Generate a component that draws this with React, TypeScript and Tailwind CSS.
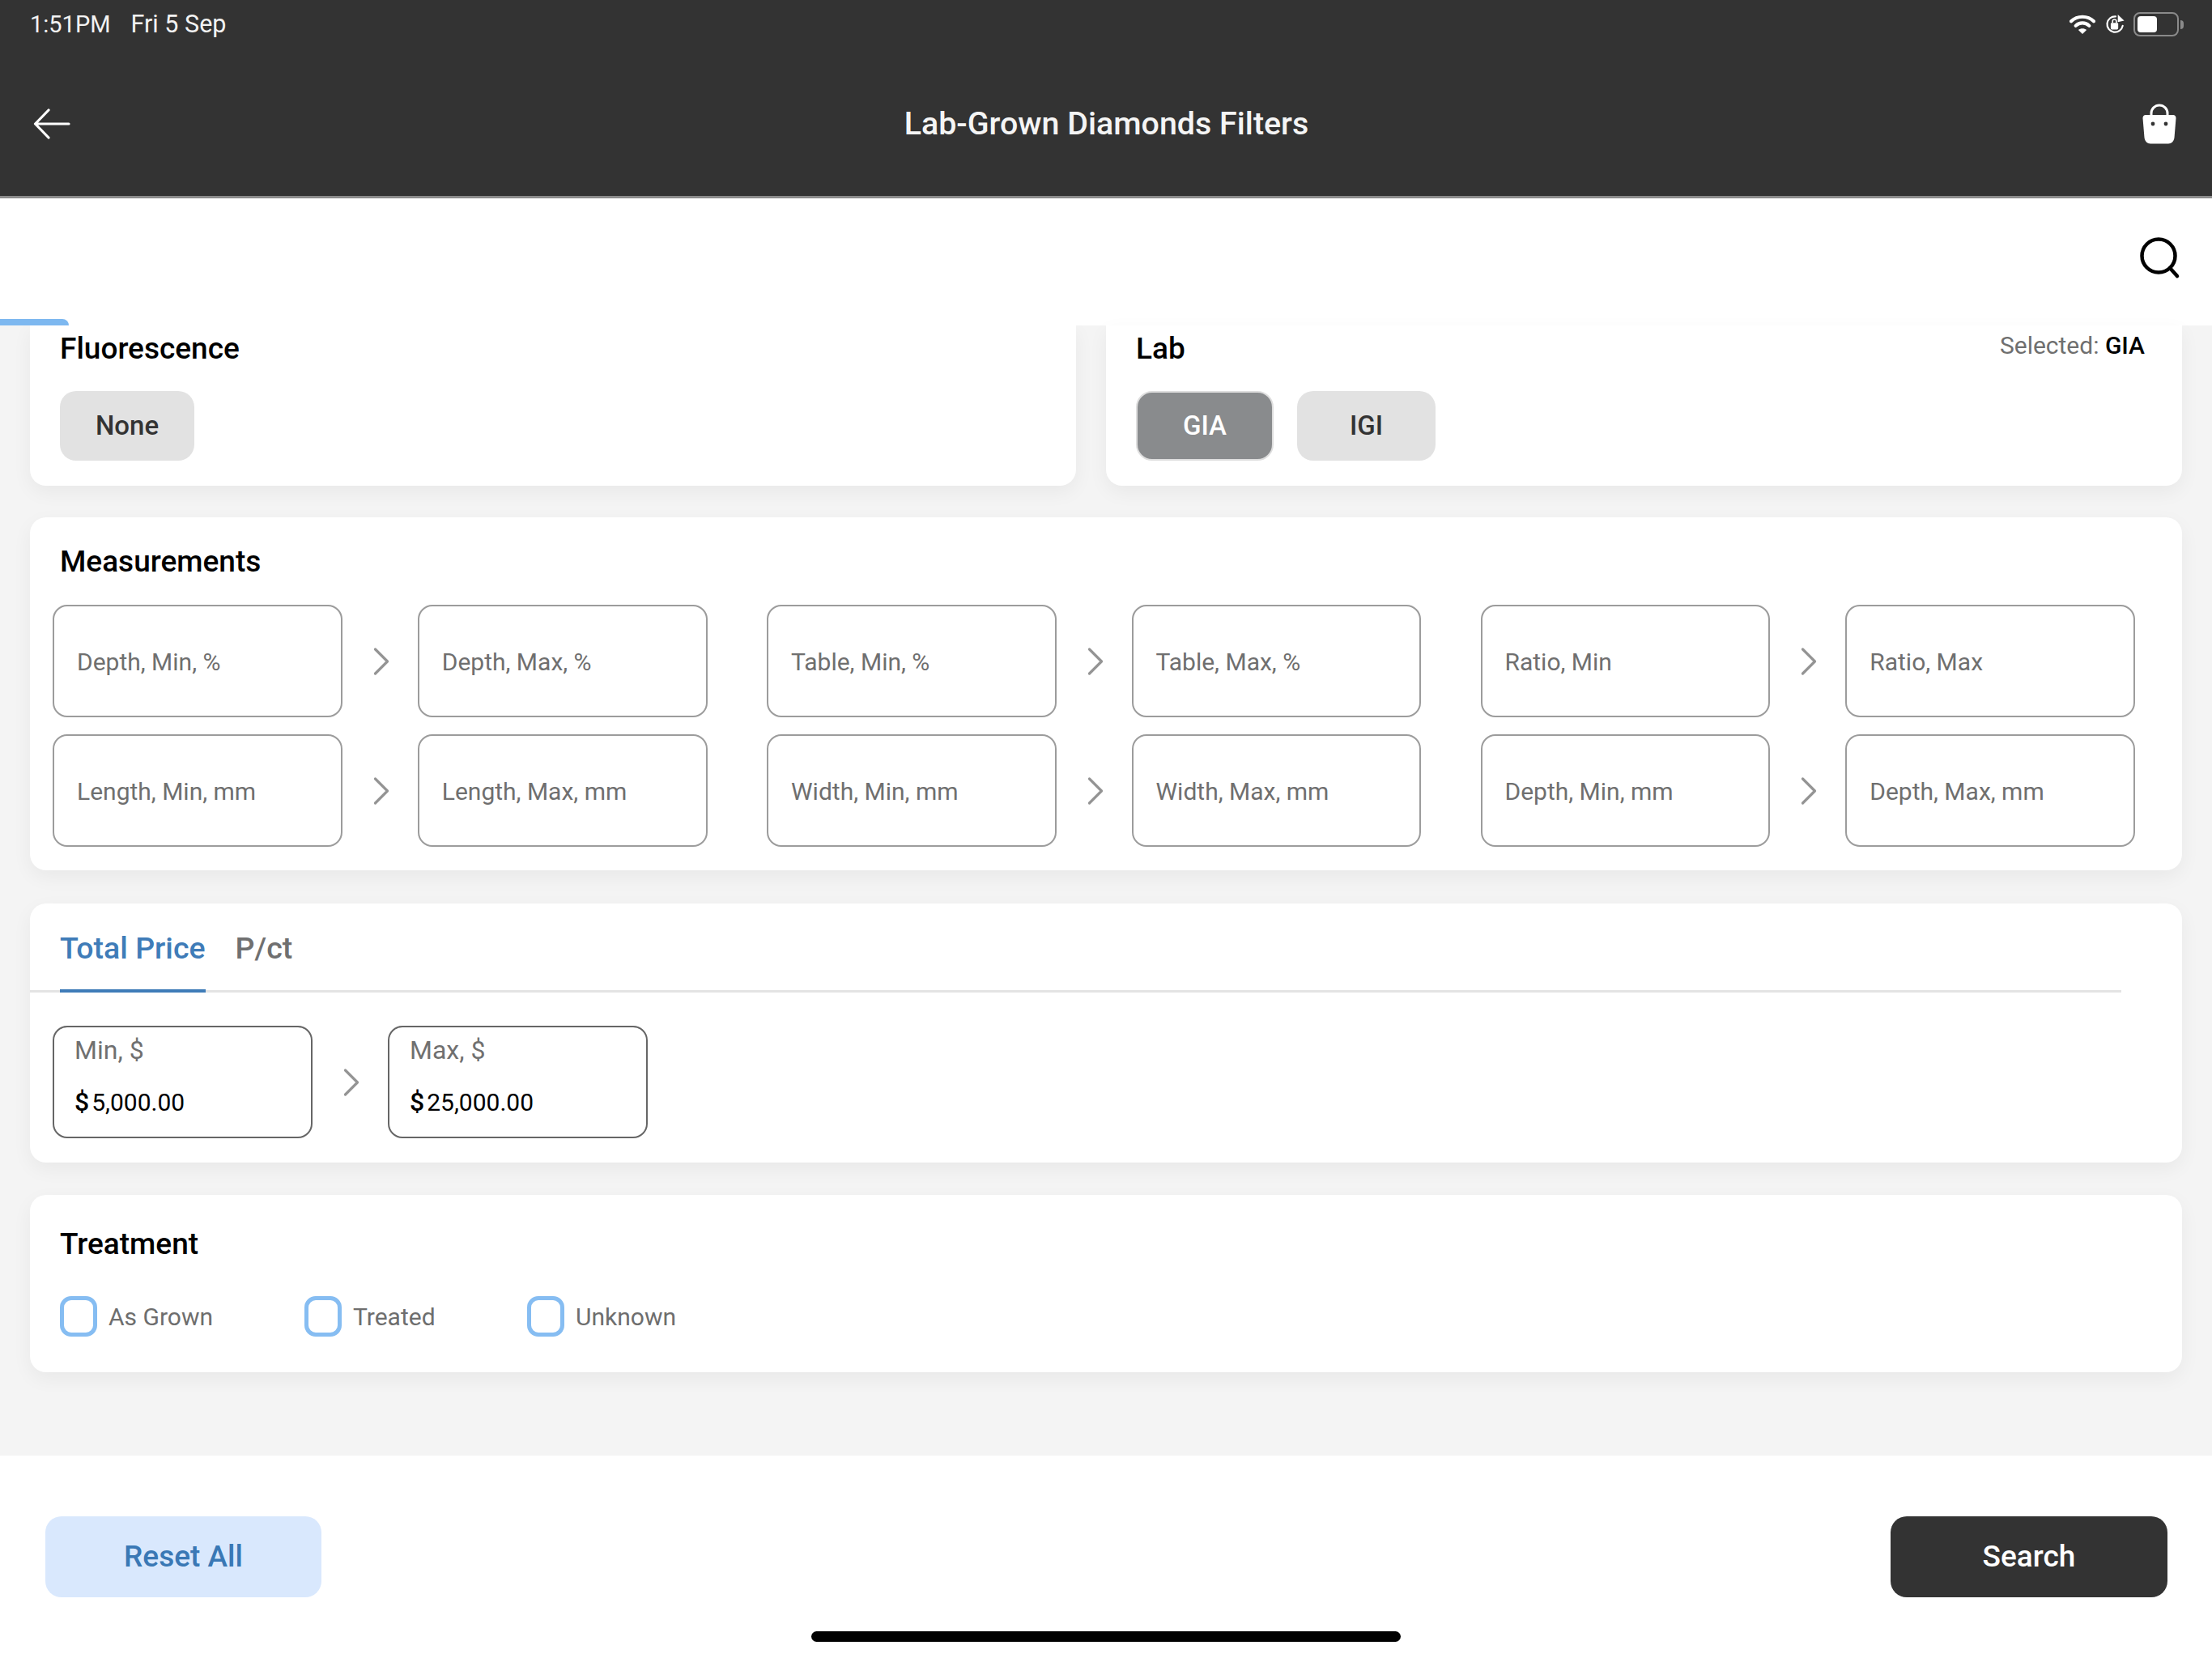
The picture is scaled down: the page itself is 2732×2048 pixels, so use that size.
import { ChevronRight } from "lucide-react";

const measurements = [
  ["Depth, Min, %", "Depth, Max, %"],
  ["Table, Min, %", "Table, Max, %"],
  ["Ratio, Min", "Ratio, Max"],
  ["Length, Min, mm", "Length, Max, mm"],
  ["Width, Min, mm", "Width, Max, mm"],
  ["Depth, Min, mm", "Depth, Max, mm"],
];

const cardClass = "bg-white rounded-[20px] shadow-[0_8px_24px_rgba(0,0,0,0.05)]";

function Arrow() {
  return (
    <div className="w-[93px] shrink-0 pl-[3px] flex items-center justify-center">
      <ChevronRight className="w-[60px] h-[60px] text-[#949494]" strokeWidth={1.3} />
    </div>
  );
}

function MeasureField({ label }: { label: string }) {
  return (
    <div className="flex-1 h-[139px] rounded-[18px] border-2 border-[#9c9c9c] flex items-center pl-[28px] pt-[1px] text-[30px] text-[#6f6f6f]">
      {label}
    </div>
  );
}

function PriceField({ label, value }: { label: string; value: string }) {
  return (
    <div className="w-[321px] h-[139px] rounded-[18px] border-[2.5px] border-[#666666] pl-[25px] pt-[9px] flex flex-col">
      <span className="text-[32px] leading-[38px] text-[#707070]">{label}</span>
      <span className="mt-[26px] text-[30px] leading-[38px] text-black">
        <span className="text-[32px] font-medium mr-[3px]">$</span>
        {value}
      </span>
    </div>
  );
}

function Check({ label, className }: { label: string; className: string }) {
  return (
    <div className={`flex items-center ${className}`}>
      <div className="w-[46px] h-[50px] rounded-[14px] border-[5px] border-[#86bdf2]" />
      <span className="ml-[14px] text-[30px] text-[#6e6e6e]">{label}</span>
    </div>
  );
}

export default function App() {
  return (
    <div className="w-full h-screen overflow-hidden flex flex-col bg-[#f4f4f4] font-['Roboto',sans-serif]">
      {/* header */}
      <header className="h-[245px] shrink-0 bg-[#333333] border-b-[3px] border-[#8c8c8c] text-white flex flex-col">
        <div className="h-[60px] pl-[37px] pr-[35px] flex items-center justify-between text-[#f2f2f2]">
          <div className="flex items-baseline gap-[25px]">
            <span className="text-[29px]">1:51PM</span>
            <span className="text-[30.5px]">Fri 5 Sep</span>
          </div>
          <div className="flex items-center">
            <svg width="32" height="26" viewBox="0 0 34 28" fill="none" className="mr-[12px]">
              <path d="M2 10 C10 2 24 2 32 10" stroke="white" strokeWidth="4.5" strokeLinecap="round" />
              <path d="M8 16 C13 11 21 11 26 16" stroke="white" strokeWidth="4.5" strokeLinecap="round" />
              <path d="M17 27 L11.5 21.5 C14.5 19 19.5 19 22.5 21.5 Z" fill="white" />
            </svg>
            <svg width="24" height="26" viewBox="0 0 26 28" fill="none" className="mr-[11px]">
              <path d="M23.5 16 A10.5 10.5 0 1 1 14 3.5" stroke="white" strokeWidth="2.4" strokeLinecap="round" />
              <path d="M17 1 L25.5 9 L17 11 Z" fill="white" />
              <rect x="7.5" y="12" width="10" height="9" rx="1.5" fill="white" />
              <path d="M10 12 V10 A2.5 2.5 0 0 1 15 10 V12" stroke="white" strokeWidth="1.8" />
            </svg>
            <div className="w-[56px] h-[30px] rounded-[8px] border-2 border-[#8a8a8a] p-[3px]">
              <div className="w-[24px] h-full rounded-[4px] bg-white" />
            </div>
            <div className="w-[4px] h-[11px] ml-[2px] rounded-r-full bg-[#8a8a8a]" />
          </div>
        </div>
        <div className="flex-1 flex items-center justify-between pl-[41px] pr-[44px] pt-[4px]">
          <svg width="46" height="38" viewBox="0 0 46 38" fill="none">
            <path d="M44 19 H3 M19 2 L2.5 19 L19 36" stroke="white" strokeWidth="3.2" strokeLinecap="round" strokeLinejoin="round" />
          </svg>
          <h1 className="text-[39.4px] font-medium text-[#f5f5f5]">Lab-Grown Diamonds Filters</h1>
          <svg width="42" height="50" viewBox="0 0 42 50" fill="none">
            <path d="M11 18 V12 A10 10 0 0 1 31 12 V18" stroke="white" strokeWidth="3" />
            <path d="M4 14 H38 C40 14 41.5 15.5 41.5 18 L39.5 42 C39 46.5 36 49.5 32 49.5 H10 C6 49.5 3 46.5 2.5 42 L0.5 18 C0.5 15.5 2 14 4 14 Z" fill="white" />
            <circle cx="13" cy="25" r="2.4" fill="#333333" />
            <circle cx="29" cy="25" r="2.4" fill="#333333" />
          </svg>
        </div>
      </header>

      {/* search strip */}
      <div className="h-[157px] shrink-0 bg-white relative flex items-center justify-end pr-[39px] pb-[10px]">
        <svg width="50" height="52" viewBox="0 0 50 52" fill="none">
          <circle cx="23" cy="23" r="20.5" stroke="black" strokeWidth="4.5" />
          <path d="M37 38 L46 48" stroke="black" strokeWidth="4.5" strokeLinecap="round" />
        </svg>
        <div className="absolute left-0 bottom-0 w-[85px] h-[8px] rounded-tr-[8px] bg-[#7db8f0]" />
      </div>

      {/* filters */}
      <main className="flex-1 min-h-0 px-[37px] flex flex-col">
        <div className="flex gap-[37px]">
          <section className={`${cardClass} rounded-t-none w-[1292px] h-[198px] pl-[37px]`}>
            <h2 className="pt-[6px] text-[37px] leading-[45px] font-medium text-black">Fluorescence</h2>
            <div className="mt-[30px] w-[166px] h-[86px] rounded-[20px] bg-[#e2e2e2] flex items-center justify-center text-[33px] font-medium text-[#333333]">
              None
            </div>
          </section>
          <section className={`${cardClass} rounded-t-none flex-1 h-[198px] px-[37px] relative`}>
            <h2 className="pt-[6px] text-[37px] leading-[45px] font-medium text-black">Lab</h2>
            <span className="absolute right-[46px] top-[2px] text-[30px] text-[#6f6f6f]">
              Selected: <span className="font-medium text-black">GIA</span>
            </span>
            <div className="mt-[30px] flex gap-[29px]">
              <div className="w-[170px] h-[86px] rounded-[20px] bg-[#898b8d] border-2 border-[#dedede] flex items-center justify-center text-[33px] font-medium text-white">
                GIA
              </div>
              <div className="w-[171px] h-[86px] rounded-[20px] bg-[#e2e2e2] flex items-center justify-center text-[33px] font-medium text-[#333333]">
                IGI
              </div>
            </div>
          </section>
        </div>

        <section className={`${cardClass} mt-[39px] h-[436px] pl-[28px] pt-[32px]`}>
          <h2 className="pl-[9px] text-[37px] leading-[45px] font-medium text-black">Measurements</h2>
          <div className="mt-[31px] grid grid-cols-[808.5px_808px_808.5px] gap-x-[73.5px] gap-y-[21px]">
            {measurements.map(([min, max]) => (
              <div key={min} className="flex">
                <MeasureField label={min} />
                <Arrow />
                <MeasureField label={max} />
              </div>
            ))}
          </div>
        </section>

        <section className={`${cardClass} mt-[41px] h-[320px]`}>
          <div className="h-[110px] mr-[75px] border-b-[3px] border-[#e4e4e4] flex pl-[37px] gap-[37px] text-[37.5px] font-medium">
            <span className="h-[110px] pt-[27px] border-b-[4px] border-[#3f7cb8] text-[#3f7cb8]">Total Price</span>
            <span className="pt-[27px] text-[#707070]">P/ct</span>
          </div>
          <div className="mt-[41px] pl-[28px] flex items-center">
            <PriceField label="Min, $" value="5,000.00" />
            <Arrow />
            <PriceField label="Max, $" value="25,000.00" />
          </div>
        </section>

        <section className={`${cardClass} mt-[40px] h-[219px] pl-[37px] pt-[38px]`}>
          <h2 className="text-[37px] leading-[45px] font-medium text-black">Treatment</h2>
          <div className="mt-[42px] flex">
            <Check label="As Grown" className="w-[302px]" />
            <Check label="Treated" className="w-[275px]" />
            <Check label="Unknown" className="w-[300px]" />
          </div>
        </section>
      </main>

      {/* footer */}
      <footer className="h-[250px] shrink-0 bg-white relative flex justify-between pl-[56px] pr-[55px] pt-[75px]">
        <button className="w-[341px] h-[100px] rounded-[20px] bg-[#d9e8fd] text-[37px] font-medium text-[#3a78b5]">Reset All</button>
        <button className="w-[342px] h-[100px] rounded-[20px] bg-[#333333] text-[37px] font-medium text-white">Search</button>
        <div className="absolute left-[1002px] bottom-[20px] w-[728px] h-[13px] rounded-full bg-black" />
      </footer>
    </div>
  );
}
